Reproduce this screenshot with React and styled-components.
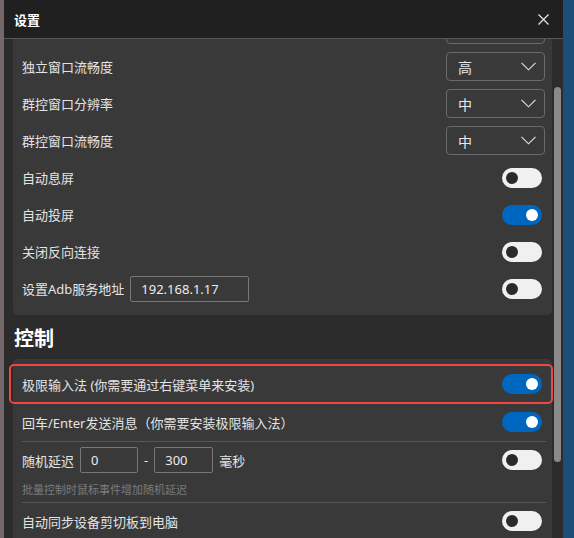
import React, { useLayoutEffect, useRef } from 'react';
import styled, { createGlobalStyle } from 'styled-components';

const GlobalStyle = createGlobalStyle`
  html, body {
    margin: 0;
    height: 100%;
    overflow: hidden;
  }
  body {
    background: linear-gradient(to right, #74686a 0 4px, #1d4e7b 4px);
    font-family: "Noto Sans", "Noto Sans CJK SC", sans-serif;
  }
`;

function Chevron() {
  return (
    <svg width="15" height="9" viewBox="0 0 15 9" fill="none">
      <polyline points="0.5,0.8 7.5,7.8 14.5,0.8" stroke="#e4e4e4" strokeWidth="1.1" />
    </svg>
  );
}

function CloseIcon() {
  return (
    <svg width="11" height="11" viewBox="0 0 11 11" fill="none">
      <path d="M0.5 0.5 L10.5 10.5 M10.5 0.5 L0.5 10.5" stroke="#e8e8e8" strokeWidth="1.2" />
    </svg>
  );
}

function Select({ value }) {
  return (
    <SelectBox>
      <span>{value}</span>
      <Chevron />
    </SelectBox>
  );
}

const windowRows = [
  { label: '独立窗口分辨率', select: '中' },
  { label: '独立窗口流畅度', select: '高', target: true },
  { label: '群控窗口分辨率', select: '中' },
  { label: '群控窗口流畅度', select: '中' },
  { label: '自动息屏', toggle: false },
  { label: '自动投屏', toggle: true },
  { label: '关闭反向连接', toggle: false },
];

function Settings() {
  const bodyRef = useRef(null);
  const targetRef = useRef(null);

  // the dialog is shown scrolled down a little
  useLayoutEffect(() => {
    if (bodyRef.current && targetRef.current) {
      bodyRef.current.scrollTop = targetRef.current.offsetTop - 9;
    }
  }, []);

  return (
    <Window>
      <TitleBar>
        <Title>设置</Title>
        <CloseIcon />
      </TitleBar>

      <Body ref={bodyRef}>
        <Card>
          {windowRows.map((row) => (
            <Row key={row.label} ref={row.target ? targetRef : undefined}>
              <Label>{row.label}</Label>
              {row.select ? <Select value={row.select} /> : <Toggle $on={row.toggle} />}
            </Row>
          ))}
          <Row>
            <Label>设置Adb服务地址</Label>
            <TextBox $w={119} defaultValue="192.168.1.17" />
            <Toggle $on={false} />
          </Row>
        </Card>

        <SectionTitle>控制</SectionTitle>
        <Card>
          <Row $h={38} $highlight>
            <Label>极限输入法 (你需要通过右键菜单来安装)</Label>
            <Toggle $on />
          </Row>
          <Row $h={38}>
            <Label>回车/Enter发送消息（你需要安装极限输入法）</Label>
            <Toggle $on />
          </Row>
          <Divider />
          <Row $h={36}>
            <Label>随机延迟</Label>
            <TextBox $w={58} defaultValue="0" />
            <Label>-</Label>
            <TextBox $w={59} defaultValue="300" />
            <Label>毫秒</Label>
            <Toggle $on={false} />
          </Row>
          <Hint>批量控制时鼠标事件增加随机延迟</Hint>
          <Divider />
          <Row $h={36}>
            <Label>自动同步设备剪切板到电脑</Label>
            <Toggle $on={false} />
          </Row>
        </Card>
      </Body>

      <ScrollThumb />
    </Window>
  );
}

export default function App() {
  return (
    <>
      <GlobalStyle />
      <Settings />
    </>
  );
}

const Window = styled.div`
  position: relative;
  margin-left: 4px;
  width: 559px;
  height: 538px;
  background: #2c2c2c;
  display: flex;
  flex-direction: column;
  overflow: hidden;
`;

const TitleBar = styled.div`
  flex-shrink: 0;
  height: 38px;
  background: #202020;
  border-bottom: 1px solid #575757;
  display: flex;
  align-items: center;
  justify-content: space-between;
  padding: 0 14px 0 10px;
`;

const Title = styled.div`
  font-size: 13px;
  font-weight: 700;
  color: #ffffff;
`;

const Body = styled.div`
  position: relative;
  flex: 1;
  overflow: hidden;
  padding: 0 11px 0 9px;
`;

const SectionTitle = styled.div`
  font-size: 20px;
  font-weight: 700;
  line-height: 28px;
  color: #ffffff;
  margin: 10px 0 6px 1px;
`;

const Card = styled.div`
  background: #393939;
  border-radius: 5px;
  padding: 6px 0 8px;
`;

const Row = styled.div`
  position: ${(p) => (p.$highlight ? 'relative' : 'static')};
  height: ${(p) => p.$h || 37}px;
  display: flex;
  align-items: center;
  gap: 6px;
  padding: 0 10px 0 9px;

  ${(p) =>
    p.$highlight &&
    `
    &::after {
      content: '';
      position: absolute;
      top: -1px;
      bottom: -1px;
      left: -4px;
      right: -1px;
      border: 2px solid #ef4646;
      border-radius: 5px;
      pointer-events: none;
    }
  `}
`;

const Label = styled.span`
  font-size: 13px;
  color: #e4e4e4;
  white-space: nowrap;
`;

const SelectBox = styled.div`
  margin-left: auto;
  margin-right: -3px;
  box-sizing: border-box;
  width: 99px;
  height: 29px;
  border: 1px solid #6a6a6a;
  border-radius: 4px;
  display: flex;
  align-items: center;
  justify-content: space-between;
  padding: 0 8px 0 11px;
  font-size: 14px;
  color: #e8e8e8;
`;

const Toggle = styled.div`
  margin-left: auto;
  position: relative;
  flex-shrink: 0;
  width: 40px;
  height: 20px;
  border-radius: 10px;
  background: ${(p) => (p.$on ? '#0067c0' : '#f0f0f0')};

  &::after {
    content: '';
    position: absolute;
    top: 4px;
    ${(p) => (p.$on ? 'right: 4px;' : 'left: 4px;')}
    width: 12px;
    height: 12px;
    border-radius: 50%;
    background: ${(p) => (p.$on ? '#ffffff' : '#2a2a2a')};
  }
`;

const TextBox = styled.input`
  box-sizing: border-box;
  width: ${(p) => p.$w}px;
  height: 26px;
  border: 1px solid #777777;
  border-radius: 2px;
  background: transparent;
  color: #ececec;
  font-family: "Noto Sans", "Noto Sans CJK SC", sans-serif;
  font-size: 13px;
  padding: 0 10px;
  outline: none;
`;

const Hint = styled.div`
  height: 24px;
  line-height: 24px;
  padding-left: 9px;
  font-size: 11px;
  color: #7c7c7c;
`;

const Divider = styled.div`
  height: 1px;
  background: #565656;
  margin: 0 6px 0 9px;
`;

const ScrollThumb = styled.div`
  position: absolute;
  right: 2px;
  top: 87px;
  width: 7px;
  height: 375px;
  border-radius: 4px;
  background: #8a8a8a;
`;
